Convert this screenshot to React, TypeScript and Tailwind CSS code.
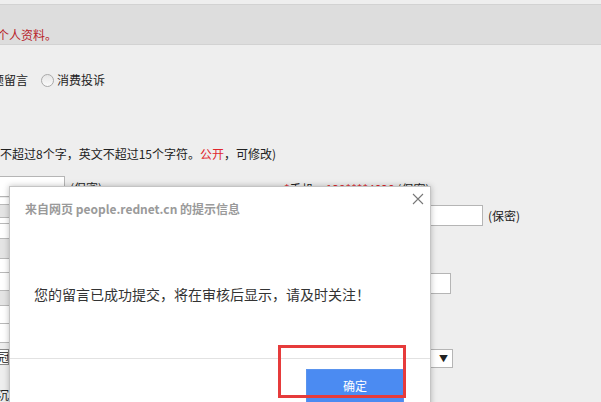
import React from 'react'

const font = { fontFamily: '"Microsoft YaHei", "Noto Sans CJK SC", "Noto Sans", sans-serif' }

function LeftCells() {
  const rows = [7, 13, 6, 15, 20, 14, 18, 15, 18, 19]
  return (
    <div className="flex flex-col w-[10px]">
      {rows.map((h, i) => (
        <div
          key={i}
          style={{ height: h }}
          className={`border-b border-[#b9b9b9] ${i % 3 === 1 ? 'bg-[#e4e4e4]' : 'bg-white'}`}
        />
      ))}
    </div>
  )
}

function Dialog() {
  return (
    <div className="absolute left-[9px] top-[186px] w-[422px] h-[240px] bg-white border border-[#c4c4c4] shadow-[0_0_6px_rgba(0,0,0,0.25)]">
      <button className="absolute right-[5px] top-[5px] w-[14px] h-[14px] text-[#777]">
        <svg viewBox="0 0 14 14" width="14" height="14">
          <path d="M2 2L12 12M12 2L2 12" stroke="currentColor" strokeWidth="1.1" fill="none" />
        </svg>
      </button>
      <div className="pt-[14px] pl-[15px] text-[12px] leading-[16px] font-bold text-[#9a9a9a]">
        来自网页 people.rednet.cn 的提示信息
      </div>
      <div className="mt-[67px] pl-[24px] text-[14px] leading-[20px] text-[#333]">
        您的留言已成功提交，将在审核后显示，请及时关注！
      </div>
      <div className="mt-[54px] border-t border-[#e2e2e2]" />
      <div className="flex justify-end pr-[26px] pt-[10px]">
        <button className="w-[98px] h-[34px] bg-[#4b8bf2] border border-[#5a94ee] text-white text-[12px]">
          确定
        </button>
      </div>
    </div>
  )
}

export default function App() {
  return (
    <div className="relative w-[601px] h-[402px] overflow-hidden bg-[#eeeeee] text-[12px] text-[#222]" style={font}>
      <div className="h-[4px]" />
      <div className="h-[41px] bg-[#dddddd] border-y border-[#d2d2d2] flex items-end pb-[1px]">
        <span className="text-[#b8232a] -ml-[3px] leading-[16px]">个人资料。</span>
      </div>

      <div className="mt-[27px] flex items-center h-[16px]">
        <span className="-ml-[20px]">主题留言</span>
        <span className="ml-[13px] w-[13px] h-[13px] rounded-full border border-[#a9a9a9] bg-gradient-to-b from-[#e6e6e6] to-[#fafafa]" />
        <span className="ml-[3px]">消费投诉</span>
      </div>

      <div className="mt-[58px] h-[16px] leading-[16px] whitespace-nowrap">
        不超过8个字，英文不超过15个字符。<span className="text-[#e0262d]">公开</span>，可修改)
      </div>

      <div className="mt-[14px] flex h-[22px] items-start">
        <div className="flex items-start w-[284px]">
          <div className="w-[65px] h-[21px] bg-white border border-[#b5b5b5] border-l-0" />
          <span className="ml-[5px] mt-[3px]">(保密)</span>
        </div>
        <div className="mt-[4px] whitespace-nowrap">
          <span className="text-[#e0262d]">*</span>手机：<span className="text-[#e0262d]">139****4020</span> (保密)
        </div>
      </div>

      <div className="flex">
        <LeftCells />
        <div className="flex-1 flex flex-col">
          <div className="flex items-center pl-[390px] mt-[7px]">
            <div className="w-[83px] h-[21px] bg-white border border-[#b5b5b5]" />
            <span className="ml-[5px]">(保密)</span>
          </div>
          <div className="flex pl-[380px] mt-[47px]">
            <div className="w-[61px] h-[21px] bg-white border border-[#b5b5b5]" />
          </div>
          <div className="flex pl-[420px] mt-[55px]">
            <div className="w-[23px] h-[19px] bg-white border border-[#b5b5b5] flex items-center justify-center text-[9px] pl-[4px]">
              ▼
            </div>
          </div>
        </div>
      </div>

      <div className="-mt-[19px] w-[12px] h-[16px] border border-[#8a8a8a] bg-white leading-[14px] overflow-hidden -ml-[3px]">
        冠
      </div>
      <div className="mt-[22px] -ml-[3px] leading-[16px]">沉</div>

      <Dialog />
      <div className="absolute left-[278px] top-[345px] w-[128px] h-[53px] border-[3px] border-[#e63b3b]" />
    </div>
  )
}
